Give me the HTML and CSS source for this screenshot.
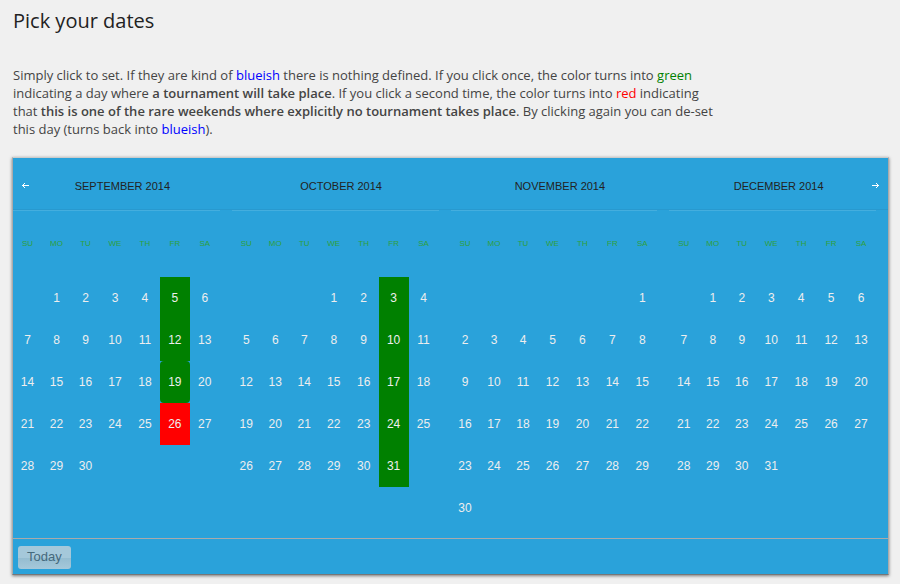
FILE: index.html
```html
<!DOCTYPE html>
<html lang="en">
<head>
<meta charset="utf-8">
<title>Pick your dates</title>
<link rel="stylesheet" href="styles.css">
</head>
<body>
<main class="page">
  <h1 class="title">Pick your dates</h1>
  <p class="intro">Simply click to set. If they are kind of <span class="blueish">blueish</span> there is nothing defined. If you click once, the color turns into <span class="green">green</span> indicating a day where <strong>a tournament will take place</strong>. If you click a second time, the color turns into <span class="red">red</span> indicating that <strong>this is one of the rare weekends where explicitly no tournament takes place</strong>. By clicking again you can de-set this day (turns back into <span class="blueish">blueish</span>).</p>
  <section class="picker">
    <button class="nav nav-prev" type="button" aria-label="Previous">
      <svg class="arrow" viewBox="0 0 7 5" shape-rendering="crispEdges"><path d="M0 2h7v1H0zM1 1h1v3H1zM2 0h1v1H2zM2 4h1v1H2z"/></svg>
    </button>
    <button class="nav nav-next" type="button" aria-label="Next">
      <svg class="arrow" viewBox="0 0 7 5" shape-rendering="crispEdges"><path d="M0 2h7v1H0zM5 1h1v3H5zM4 0h1v1H4zM4 4h1v1H4z"/></svg>
    </button>
    <div class="months" id="months"></div>
    <footer class="footer"><button class="today" type="button">Today</button></footer>
  </section>
</main>
<script src="calendar.js"></script>
</body>
</html>
```
FILE: styles.css
```css
* {
  box-sizing: border-box;
}

body {
  margin: 0;
  background: #f0f0f0;
  color: #444;
  font: 13px/18px "Open Sans", sans-serif;
}

.page {
  padding: 8px 11px 9px 12px;
}

.title {
  margin: 0 1px 32px;
  color: #222;
  font-size: 20px;
  font-weight: 400;
  line-height: 26px;
}

.intro {
  max-width: 702px;
  margin: 0 1px 19px;
}

.intro strong {
  font-weight: 600;
}

.blueish {
  color: #00f;
}

.green {
  color: green;
}

.red {
  color: red;
}

.picker {
  position: relative;
  border: 1px solid #aaa;
  border-top-color: #ccc;
  border-bottom-color: #777;
  background: #2aa2da;
  box-shadow: 0 1px 3px rgba(0, 0, 0, 0.5);
  font-family: "Liberation Sans", Arial, sans-serif;
}

.months {
  display: grid;
  grid-template-columns: repeat(4, 1fr);
  padding-bottom: 9px;
}

.month-title {
  height: 52px;
  margin: 0;
  padding-top: 19px;
  border-bottom: 1px solid #2899cf;
  color: #222;
  font-size: 11px;
  font-weight: 400;
  line-height: 18px;
  text-align: center;
  text-transform: uppercase;
}

.month-wrap {
  padding-right: 12px;
}

.month-table {
  width: 100%;
  border-top: 1px solid #44aede;
  border-collapse: separate;
  border-spacing: 0;
  table-layout: fixed;
}

.narrow {
  width: 29px;
}

.month-table th {
  height: 66px;
  padding: 0;
  color: #2fa03c;
  font-size: 8px;
  font-weight: 400;
  text-transform: uppercase;
}

.month-table td {
  height: 42px;
  padding: 0;
}

.day {
  display: block;
  color: #eee;
  font-size: 12px;
  line-height: 42px;
  text-align: center;
  text-decoration: none;
}

.day-on {
  background: green;
}

.day-off {
  background: red;
}

.day-current {
  border-radius: 4px;
}

.nav {
  position: absolute;
  top: 18px;
  display: flex;
  align-items: center;
  justify-content: center;
  width: 19px;
  height: 19px;
  padding: 0;
  border: 0;
  background: none;
}

.nav-prev {
  left: 3px;
}

.nav-next {
  right: 3px;
}

.arrow {
  width: 7px;
  height: 5px;
  fill: #fff;
}

.footer {
  display: flex;
  padding: 7px 5px 5px;
  border-top: 1px solid #aaa;
}

.today {
  height: 23px;
  padding: 0 9px 2px;
  border: 0;
  border-radius: 3px;
  background: linear-gradient(#a5c8da 50%, #94bcd0 50%, #a5c8da);
  color: #45697c;
  font: 13px/20px "Liberation Sans", Arial, sans-serif;
}
```
FILE: calendar.js
```js
const months = [
  { name: "September 2014", first: 1, days: 30, on: [5, 12, 19], off: [26], current: 19 },
  { name: "October 2014", first: 3, days: 31, on: [3, 10, 17, 24, 31], off: [] },
  { name: "November 2014", first: 6, days: 30, on: [], off: [] },
  { name: "December 2014", first: 1, days: 31, on: [], off: [] }
];
const weekdays = ["Su", "Mo", "Tu", "We", "Th", "Fr", "Sa"];

function dayCell(month, day) {
  if (day < 1 || day > month.days) return "<td></td>";
  let name = "day";
  if (month.on.includes(day)) name += " day-on";
  if (month.off.includes(day)) name += " day-off";
  if (month.current === day) name += " day-current";
  return `<td><a class="${name}" href="#">${day}</a></td>`;
}

function monthMarkup(month) {
  const weeks = Math.ceil((month.first + month.days) / 7);
  let rows = "";
  for (let w = 0; w < weeks; w++) {
    rows += "<tr>" + weekdays.map((_, d) => dayCell(month, w * 7 + d + 1 - month.first)).join("") + "</tr>";
  }
  return `<div class="month"><h2 class="month-title">${month.name}</h2>
    <div class="month-wrap"><table class="month-table" aria-label="${month.name}">
    <colgroup><col class="narrow" span="3"><col span="4"></colgroup>
    <thead><tr>${weekdays.map(d => `<th scope="col">${d}</th>`).join("")}</tr></thead>
    <tbody>${rows}</tbody></table></div></div>`;
}

const root = document.getElementById("months");
root.innerHTML = months.map(monthMarkup).join("");

// Each click moves a day through: undefined, tournament, no tournament.
root.addEventListener("click", event => {
  const day = event.target.closest(".day");
  if (!day) return;
  event.preventDefault();
  if (day.classList.contains("day-on")) {
    day.classList.replace("day-on", "day-off");
  } else if (day.classList.contains("day-off")) {
    day.classList.remove("day-off");
  } else {
    day.classList.add("day-on");
  }
});
```
